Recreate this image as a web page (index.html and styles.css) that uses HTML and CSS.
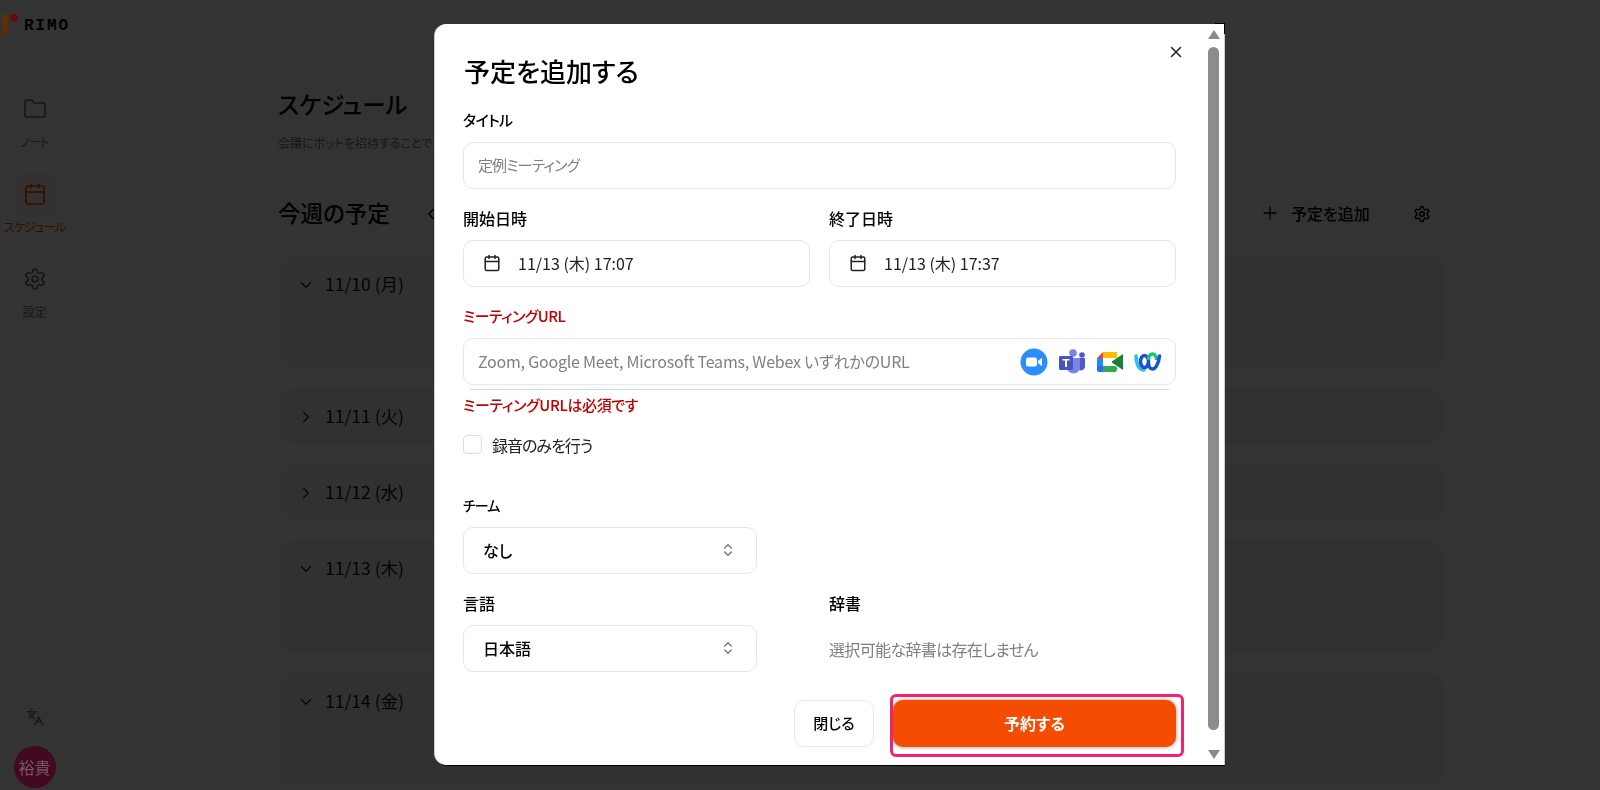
FILE: index.html
```html
<!DOCTYPE html>
<html lang="ja">
<head>
    <meta charset="UTF-8">
    <title>RIMO スケジュール</title>
    <link rel="stylesheet" href="styles.css">
</head>
<body>
    <svg class="sprites" width="0" height="0">
        <symbol id="i-gear" viewBox="0 0 24 24"><path d="M12.22 2h-.44a2 2 0 0 0-2 2v.18a2 2 0 0 1-1 1.73l-.43.25a2 2 0 0 1-2 0l-.15-.08a2 2 0 0 0-2.73.73l-.22.38a2 2 0 0 0 .73 2.73l.15.1a2 2 0 0 1 1 1.72v.51a2 2 0 0 1-1 1.74l-.15.09a2 2 0 0 0-.73 2.73l.22.38a2 2 0 0 0 2.73.73l.15-.08a2 2 0 0 1 2 0l.43.25a2 2 0 0 1 1 1.73V20a2 2 0 0 0 2 2h.44a2 2 0 0 0 2-2v-.18a2 2 0 0 1 1-1.73l.43-.25a2 2 0 0 1 2 0l.15.08a2 2 0 0 0 2.73-.73l.22-.39a2 2 0 0 0-.73-2.73l-.15-.08a2 2 0 0 1-1-1.74v-.5a2 2 0 0 1 1-1.74l.15-.09a2 2 0 0 0 .73-2.73l-.22-.38a2 2 0 0 0-2.73-.73l-.15.08a2 2 0 0 1-2 0l-.43-.25a2 2 0 0 1-1-1.73V4a2 2 0 0 0-2-2z"/><circle cx="12" cy="12" r="3"/></symbol>
        <symbol id="i-cal" viewBox="0 0 24 24"><path d="M8 2v4M16 2v4"/><rect x="3" y="4" width="18" height="18" rx="2"/><path d="M3 10h18"/></symbol>
        <symbol id="i-down" viewBox="0 0 24 24"><path d="m6 9 6 6 6-6"/></symbol>
        <symbol id="i-right" viewBox="0 0 24 24"><path d="m9 6 6 6-6 6"/></symbol>
        <symbol id="i-updown" viewBox="0 0 24 24"><path d="m7 9 5-5 5 5M7 15l5 5 5-5"/></symbol>
    </svg>

    <div class="app">
        <aside class="sidebar">
            <div class="logo">
                <span class="logo-mark"><span class="logo-bar"></span><span class="logo-dot"></span></span>
                <span class="logo-text">RIMO</span>
            </div>
            <nav class="nav">
                <a class="nav-item">
                    <span class="nav-icon">
                        <svg class="icon icon-24" viewBox="0 0 24 24"><path d="M20 20a2 2 0 0 0 2-2V8a2 2 0 0 0-2-2h-7.900a2 2 0 0 1-1.690-.9L9.600 3.900A2 2 0 0 0 7.930 3H4a2 2 0 0 0-2 2v13a2 2 0 0 0 2 2Z"/></svg>
                    </span>
                    <span class="nav-label kana">ノート</span>
                </a>
                <a class="nav-item active">
                    <span class="nav-icon">
                        <svg class="icon icon-24"><use href="#i-cal"/></svg>
                    </span>
                    <span class="nav-label kana">スケジュール</span>
                </a>
                <a class="nav-item">
                    <span class="nav-icon">
                        <svg class="icon icon-24"><use href="#i-gear"/></svg>
                    </span>
                    <span class="nav-label">設定</span>
                </a>
            </nav>
            <div class="sidebar-bottom">
                <svg class="icon icon-18" viewBox="0 0 24 24"><path d="m5 8 6 6M4 14l6-6 2-3M2 5h12M7 2h1M22 22l-5-10-5 10M14 18h6"/></svg>
                <div class="avatar">裕貴</div>
            </div>
        </aside>

        <main class="main">
            <h1 class="page-title">スケジュール</h1>
            <p class="page-sub">会議にボットを招待することで自動で文字起こしを行います</p>
            <div class="week-bar">
                <h2 class="week-title">今週の予定</h2>
                <svg class="icon icon-18 week-prev" viewBox="0 0 24 24"><path d="m15 6-6 6 6 6"/></svg>
                <div class="week-actions">
                    <button class="add-button">
                        <svg class="icon icon-16" viewBox="0 0 24 24"><path d="M12 3v18M3 12h18"/></svg>
                        予定を追加
                    </button>
                    <svg class="icon icon-18"><use href="#i-gear"/></svg>
                </div>
            </div>
            <section class="days">
                <div class="day day-1"><svg class="icon icon-18"><use href="#i-down"/></svg>11/10 (月)</div>
                <div class="day day-2"><svg class="icon icon-18"><use href="#i-right"/></svg>11/11 (火)</div>
                <div class="day day-2"><svg class="icon icon-18"><use href="#i-right"/></svg>11/12 (水)</div>
                <div class="day day-3"><svg class="icon icon-18"><use href="#i-down"/></svg>11/13 (木)</div>
                <div class="day day-1"><svg class="icon icon-18"><use href="#i-down"/></svg>11/14 (金)</div>
            </section>
        </main>
    </div>

    <div class="overlay"></div>

    <div class="modal">
        <form class="modal-body">
            <button class="modal-close" type="button">
                <svg class="icon icon-18" viewBox="0 0 24 24"><path d="M18 6 6 18M6 6l12 12"/></svg>
            </button>
            <h2 class="modal-title">予定を追加する</h2>

            <div class="field">
                <label class="field-label kana-label">タイトル</label>
                <input class="text-input" type="text" placeholder="定例ミーティング">
            </div>

            <div class="field-row">
                <div>
                    <label class="field-label">開始日時</label>
                    <div class="box date-box"><svg class="icon icon-18"><use href="#i-cal"/></svg>11/13 (木) 17:07</div>
                </div>
                <div>
                    <label class="field-label">終了日時</label>
                    <div class="box date-box"><svg class="icon icon-18"><use href="#i-cal"/></svg>11/13 (木) 17:37</div>
                </div>
            </div>

            <div class="field">
                <label class="field-label kana-label error">ミーティングURL</label>
                <div class="box url-box">
                    <span class="placeholder">Zoom, Google Meet, Microsoft Teams, Webex いずれかのURL</span>
                    <span class="service-icons">
                        <svg class="service" viewBox="0 0 28 28"><circle cx="14" cy="14" r="13.500" fill="#2d8cff"/><rect x="6" y="9.500" width="11" height="9" rx="2.200" fill="#fff"/><path d="m18 13 4-3.200v8.400L18 15z" fill="#fff"/></svg>
                        <svg class="service" viewBox="0 0 28 28"><circle cx="15" cy="5" r="3.800" fill="#7b83eb"/><circle cx="24" cy="7" r="2.800" fill="#5059c9"/><path d="M20 10h7v9a4 4 0 0 1-7 2z" fill="#5059c9"/><path d="M9 10h13v11a7 7 0 0 1-13 0z" fill="#7b83eb"/><rect x="1" y="8" width="14" height="14" rx="1.400" fill="#4b53bc"/><path d="M4.500 11h7v1.600H9v6.400H7v-6.400H4.500z" fill="#fff"/></svg>
                        <svg class="service" viewBox="0 0 28 28"><path d="M7 4h14v6H7z" fill="#fbbc04"/><path d="M7 4v6H1z" fill="#ea4335"/><path d="M1 10h6v8H1z" fill="#2684fc"/><path d="M1 18h6v6H3a2 2 0 0 1-2-2z" fill="#1a73e8"/><path d="M7 18h12a2 2 0 0 1-2 6H7z" fill="#34a853"/><path d="M15 14l12-8v16z" fill="#188038"/><rect x="7" y="10" width="9" height="8" fill="#fff"/></svg>
                        <svg class="service" viewBox="0 0 28 28" fill="none"><path d="M2 8c0 8 3 14 8 14" stroke="#20c4e8" stroke-width="3.500" stroke-linecap="round"/><ellipse cx="10.500" cy="13.500" rx="4" ry="6" stroke="#1d4fd8" stroke-width="3.500"/><path d="M14.500 12c0-4 2-6 4-6s4 2 4 6" stroke="#17c37b" stroke-width="3.500"/><path d="M14.500 15c0 4 2 6 4 6 3 0 6-5 7-13" stroke="#1d4fd8" stroke-width="3.500" stroke-linecap="round"/></svg>
                    </span>
                </div>
                <div class="url-line"></div>
                <p class="error-text">ミーティングURLは必須です</p>
            </div>

            <label class="check-row"><span class="checkbox"></span>録音のみを行う</label>

            <div class="field team-field">
                <label class="field-label team-label">チーム</label>
                <div class="box select-box">なし<svg class="icon icon-16 chevrons"><use href="#i-updown"/></svg></div>
            </div>

            <div class="field-row">
                <div>
                    <label class="field-label">言語</label>
                    <div class="box select-box">日本語<svg class="icon icon-16 chevrons"><use href="#i-updown"/></svg></div>
                </div>
                <div>
                    <label class="field-label">辞書</label>
                    <p class="no-dict">選択可能な辞書は存在しません</p>
                </div>
            </div>

            <div class="modal-actions">
                <button class="btn-close" type="button">閉じる</button>
                <button class="btn-primary" type="button">予約する</button>
            </div>
        </form>

        <div class="scrollbar">
            <span class="arrow-up"></span>
            <span class="thumb"></span>
            <span class="arrow-down"></span>
        </div>
    </div>
</body>
</html>
```

FILE: styles.css
```css
* {
    box-sizing: border-box;
}

html, body {
    height: 100%;
}

body {
    margin: 0;
    overflow: hidden;
    font-family: "Noto Sans CJK JP", sans-serif;
    font-size: 16px;
    font-feature-settings: "palt";
    color: #000;
    background-color: #fff;
}

.sprites {
    position: absolute;
}

.icon {
    fill: none;
    stroke: currentColor;
    stroke-width: 2;
    stroke-linecap: round;
    stroke-linejoin: round;
    flex: none;
}

.icon-24 { width: 24px; height: 24px; }
.icon-18 { width: 18px; height: 18px; }
.icon-16 { width: 16px; height: 16px; }

/* page behind the dialog */
.app {
    display: flex;
    height: 790px;
}

.sidebar {
    width: 78px;
    flex: none;
    display: flex;
    flex-direction: column;
    align-items: center;
    padding-right: 8px;
    background-color: #fdfdfd;
    border-right: 1px solid #f4f4f4;
}

.logo {
    align-self: flex-start;
    display: flex;
    align-items: center;
    gap: 6px;
    height: 48px;
    padding-left: 2px;
}

.logo-mark {
    position: relative;
    z-index: 2;
    display: flex;
    width: 16px;
    height: 21px;
}

.logo-bar {
    width: 6px;
    height: 21px;
    border-radius: 3px;
    background: linear-gradient(#5e3207, #5a2a02);
}

.logo-dot {
    width: 8px;
    height: 8px;
    margin-left: 2px;
    border-radius: 50%;
    background-color: #6a0a0a;
}

.logo-text {
    padding-top: 3px;
    font-family: "Liberation Mono", monospace;
    font-size: 16px;
    letter-spacing: 1.900px;
    font-weight: 700;
}

.nav {
    display: flex;
    flex-direction: column;
    gap: 22px;
    margin-top: 40px;
    width: 100%;
}

.nav-item {
    display: flex;
    flex-direction: column;
    align-items: center;
    gap: 3px;
    color: #666;
}

.nav-item .icon {
    stroke-width: 1.600;
}

.nav-icon {
    display: flex;
    align-items: center;
    justify-content: center;
    width: 42px;
    height: 42px;
    border-radius: 10px;
}

.nav-label {
    font-size: 12px;
    line-height: 18px;
    color: #777;
}

.nav-label.kana {
    letter-spacing: -0.800px;
}

.nav-item.active {
    color: #f44c00;
}

.nav-item.active .nav-icon {
    background-color: #fff0e8;
}

.nav-item.active .nav-label {
    color: #f44c00;
}

.sidebar-bottom {
    margin-top: auto;
    margin-bottom: 2px;
    display: flex;
    flex-direction: column;
    align-items: center;
    gap: 20px;
    color: #777;
}

.avatar {
    position: relative;
    z-index: 2;
    width: 42px;
    height: 42px;
    border-radius: 50%;
    background-color: #420a22;
    color: #7d5a68;
    display: flex;
    align-items: center;
    justify-content: center;
    font-size: 16px;
}

.main {
    flex: 1;
    min-width: 0;
    padding: 86px 155px 0 200px;
}

.page-title {
    margin: 0;
    font-size: 23.500px;
    line-height: 36px;
    font-weight: 500;
}

.page-sub {
    margin: 12px 0 0;
    font-size: 12px;
    line-height: 18px;
    color: #777;
    white-space: nowrap;
}

.week-bar {
    display: flex;
    align-items: center;
    height: 46px;
    margin-top: 39px;
}

.week-title {
    margin: 0 0 4px;
    font-size: 22.500px;
    font-weight: 500;
}

.week-prev {
    margin-left: 32px;
}

.week-actions {
    margin-left: auto;
    display: flex;
    align-items: center;
    gap: 25px;
    margin-right: 14px;
}

.add-button {
    display: flex;
    align-items: center;
    gap: 13px;
    width: 148px;
    height: 46px;
    padding: 0 21px 2px;
    background-color: #fff;
    border: 1px solid #eee;
    border-radius: 10px;
    font: inherit;
    font-feature-settings: inherit;
    font-weight: 500;
    color: #000;
    white-space: nowrap;
}

.days {
    display: flex;
    flex-direction: column;
    gap: 20px;
    margin-top: 19px;
}

.day {
    display: flex;
    align-items: flex-start;
    gap: 10px;
    padding: 16px 19px;
    font-size: 17.500px;
    line-height: 24px;
    background-color: #f6f6f6;
    border-radius: 18px;
    color: #111;
}

.day .icon {
    margin-top: 4px;
    stroke-width: 1.600;
}

.day-1 { height: 112px; }
.day-2 { height: 56px; }
.day-3 { height: 113px; }

.overlay {
    position: fixed;
    inset: 0;
    background-color: rgba(0, 0, 0, 0.8);
}

/* dialog */
.modal {
    position: fixed;
    top: 24px;
    left: 435px;
    width: 789px;
    height: 741px;
    display: flex;
    background-color: #fff;
    border-radius: 12px 0 0 12px;
    box-shadow: -1px 0 0 #ccc, 1px 0 0 #ccc, 1px 1px 0 #000;
}

.modal::after {
    content: "";
    position: absolute;
    top: -1px;
    right: -1px;
    width: 9px;
    height: 10px;
    border-top: 1px solid #000;
    border-right: 1px solid #000;
}

.modal-body {
    position: relative;
    flex: 1;
    min-width: 0;
    padding: 29px 28px 0 28px;
}

.modal-close {
    position: absolute;
    top: 19px;
    right: 19px;
    display: flex;
    padding: 0;
    background: none;
    border: none;
    color: #222;
}

.modal-title {
    margin: 0 0 22px 1px;
    font-size: 26px;
    line-height: 36px;
    font-weight: 500;
}

.field {
    margin-bottom: 20px;
}

.field-row {
    display: grid;
    grid-template-columns: 347px 347px;
    column-gap: 19px;
    margin-bottom: 20px;
}

.field-label {
    display: block;
    font-size: 16px;
    line-height: 18px;
    font-weight: 500;
    margin-bottom: 13px;
}

.kana-label {
    font-size: 15px;
    letter-spacing: -0.600px;
}

.team-label {
    font-size: 14px;
    letter-spacing: -1px;
}

.field-label.error {
    color: #c00000;
}

.text-input,
.box {
    width: 100%;
    height: 47px;
    background-color: #fff;
    border: 1px solid #e6e6e6;
    border-radius: 10px;
    font: inherit;
    font-feature-settings: inherit;
}

.text-input {
    display: block;
    padding: 0 14px 3px;
    font-size: 15px;
    letter-spacing: -0.900px;
    outline: none;
}

.text-input::placeholder,
.placeholder {
    color: #808080;
    opacity: 1;
}

.placeholder {
    letter-spacing: -0.220px;
    padding-bottom: 2px;
}

.box {
    display: flex;
    align-items: center;
}

.date-box {
    gap: 17px;
    padding: 0 0 2px 19px;
    color: #222;
}

.url-box {
    justify-content: space-between;
    padding: 0 13px 0 14px;
}

.service-icons {
    display: flex;
    align-items: center;
    gap: 10px;
}

.service {
    width: 28px;
    height: 28px;
}

.url-line {
    height: 1px;
    margin: 4px 7px 0;
    background-color: #cfd8f7;
}

.error-text {
    margin: 5px 0 0;
    font-size: 15px;
    letter-spacing: -0.350px;
    line-height: 20px;
    font-weight: 500;
    color: #c00000;
}

.check-row {
    display: flex;
    align-items: center;
    gap: 10px;
    height: 19px;
    margin-top: 4px;
    letter-spacing: -1px;
    color: #222;
}

.checkbox {
    width: 19px;
    height: 19px;
    border: 1px solid #ddd;
    border-radius: 4px;
}

.team-field {
    margin-top: 42px;
}

.select-box {
    justify-content: space-between;
    width: 294px;
    padding: 0 20px 2px 19px;
    font-weight: 500;
}

.chevrons {
    color: #777;
}

.no-dict {
    margin: 0;
    height: 47px;
    display: flex;
    align-items: center;
    color: #808080;
    letter-spacing: -0.650px;
}

.modal-actions {
    display: flex;
    justify-content: flex-end;
    gap: 19px;
    margin-top: 28px;
}

.btn-close,
.btn-primary {
    height: 47px;
    padding: 0 0 2px;
    border-radius: 10px;
    font: inherit;
    font-feature-settings: inherit;
    font-weight: 500;
}

.btn-close {
    width: 80px;
    background-color: #fff;
    border: 1px solid #e8e8e8;
    font-size: 15px;
    color: #000;
}

/* the pink frame is an annotation drawn on top of the screenshot */
.btn-primary {
    position: relative;
    width: 283px;
    background-color: #f44c00;
    border: none;
    color: #fff;
    font-weight: 700;
    box-shadow: 0 0 4px rgba(0, 0, 0, 0.45);
}

.btn-primary::after {
    content: "";
    position: absolute;
    top: -6px;
    right: -8px;
    bottom: -10px;
    left: -3px;
    border: 3px solid #f0246e;
    border-radius: 6px;
}

.scrollbar {
    width: 20px;
    flex: none;
    display: flex;
    flex-direction: column;
    align-items: center;
    padding: 6px 5px 0 4px;
}

.arrow-up,
.arrow-down {
    width: 0;
    height: 0;
    border-left: 6px solid transparent;
    border-right: 6px solid transparent;
}

.arrow-up {
    border-bottom: 9px solid #8a8a8a;
}

.arrow-down {
    border-top: 9px solid #8a8a8a;
}

.thumb {
    width: 11px;
    height: 683px;
    margin: 8px 0 20px;
    border-radius: 6px;
    background-color: #8c8c8c;
}
```
